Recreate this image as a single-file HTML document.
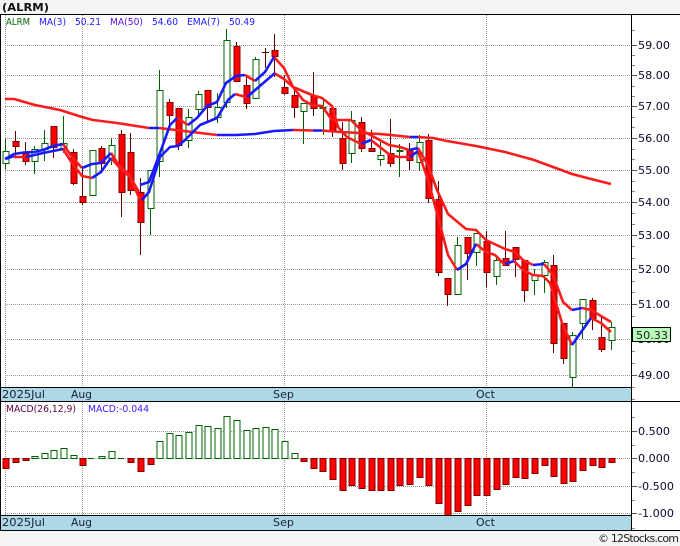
<!DOCTYPE html>
<html><head><meta charset="utf-8"><title>ALRM</title>
<style>html,body{margin:0;padding:0;background:#f4f4f4;width:680px;height:546px;overflow:hidden}svg{display:block}text{font-family:"DejaVu Sans","Liberation Sans",sans-serif;font-size:11px}.s text{font-size:10px}</style>
</head><body>
<svg width="680" height="546" viewBox="0 0 680 546" xmlns="http://www.w3.org/2000/svg">
<rect x="0" y="0" width="680" height="546" fill="#f4f4f4"/>
<rect x="0" y="14" width="680" height="516" fill="#fff"/>
<text x="2" y="11" font-weight="bold" fill="#111" textLength="47" lengthAdjust="spacingAndGlyphs">(ALRM)</text>

<g shape-rendering="crispEdges">
<path fill="none" stroke="#999" stroke-dasharray="1 1" d="M5 45.5H632M5 75.5H632M5 106.5H632M5 138.5H632M5 170.5H632M5 202.5H632M5 235.5H632M5 269.5H632M5 304.5H632M5 339.5H632M5 375.5H632M5 431.5H632M5 458.5H632M5 486.5H632M5 513.5H632M5.5 15V388M82.5 15V388M284.5 15V388M486.5 15V388M5.5 402V515M82.5 402V515M284.5 402V515M486.5 402V515"/>

<path fill="none" stroke="#006400" d="M5.5 139V169M34.5 146V174M44.5 130V161M63.5 116V153M92.5 150V195M111.5 138V165M150.5 170V235M159.5 70V177M188.5 109V148M198.5 91V115M217.5 93V123M226.5 29V108M255.5 57V98M303.5 103V144M323.5 100V135M351.5 111V163M380.5 142V166M399.5 144V177M419.5 135V171M457.5 237V294M476.5 233V266M496.5 257V285M534.5 269V295M544.5 260V293M572.5 332V387M582.5 299V339M611.5 322V350"/>
<path fill="none" stroke="#600000" d="M15.5 131V158M25.5 142V165M53.5 126V158M73.5 149V185M82.5 167V205M101.5 146V170M121.5 130V217M130.5 133V195M140.5 178V255M169.5 99V125M178.5 108V150M207.5 90V121M236.5 42V82M246.5 75V109M265.5 48V68M262 52.5H269M274.5 34V77M284.5 75V95M294.5 89V118M313.5 72V116M332.5 108V137M342.5 122V170M361.5 117V152M371.5 130V152M390.5 119V167M409.5 143V170M428.5 134V203M438.5 181V276M447.5 278V306M467.5 237V280M486.5 231V287M505.5 231V266M515.5 247V277M524.5 260V302M553.5 255V353M563.5 323V364M592.5 298V330M601.5 315V352"/>
<path fill="#fff" stroke="#006400" d="M3 151.5h6v12h-6zM32 149.5h6v12h-6zM42 143.5h6v6h-6zM61 143.5h6v5h-6zM90 150.5h6v45h-6zM109 145.5h6v13h-6zM148 170.5h6v38h-6zM157 90.5h6v71h-6zM186 117.5h6v23h-6zM196 94.5h6v15h-6zM215 107.5h6v10h-6zM224 40.5h6v62h-6zM253 59.5h6v39h-6zM301 103.5h6v8h-6zM320 107.5h6v1h-6zM349 120.5h6v33h-6zM378 155.5h6v4h-6zM397 150.5h6v1h-6zM417 142.5h6v20h-6zM455 245.5h6v49h-6zM474 233.5h6v19h-6zM494 260.5h6v16h-6zM532 275.5h6v5h-6zM542 262.5h6v13h-6zM570 335.5h6v42h-6zM580 299.5h6v24h-6zM609 327.5h6v13h-6z"/>
<path fill="#f00" stroke="#800000" d="M13 141.5h6v5h-6zM23 153.5h6v8h-6zM51 126.5h6v21h-6zM71 152.5h6v31h-6zM80 196.5h6v6h-6zM99 148.5h6v15h-6zM119 134.5h6v58h-6zM128 152.5h6v38h-6zM138 192.5h6v30h-6zM167 102.5h6v13h-6zM176 108.5h6v37h-6zM205 90.5h6v17h-6zM234 46.5h6v35h-6zM244 85.5h6v18h-6zM272 50.5h6v6h-6zM282 87.5h6v6h-6zM292 95.5h6v12h-6zM311 96.5h6v12h-6zM330 108.5h6v22h-6zM340 138.5h6v25h-6zM359 122.5h6v26h-6zM369 148.5h6v3h-6zM388 153.5h6v10h-6zM407 150.5h6v10h-6zM426 140.5h6v58h-6zM436 199.5h6v73h-6zM445 278.5h6v16h-6zM465 237.5h6v16h-6zM484 241.5h6v31h-6zM503 258.5h6v7h-6zM513 247.5h6v12h-6zM522 260.5h6v30h-6zM551 265.5h6v78h-6zM561 323.5h6v35h-6zM590 300.5h6v18h-6zM599 337.5h6v12h-6z"/>

<path fill="#fff" stroke="#006400" d="M32 456.5h6v2h-6zM42 453.5h6v5h-6zM51 450.5h6v8h-6zM61 448.5h6v10h-6zM71 455.5h6v3h-6zM99 456.5h6v2h-6zM109 451.5h6v7h-6zM157 441.5h6v17h-6zM167 433.5h6v25h-6zM176 435.5h6v23h-6zM186 432.5h6v26h-6zM196 425.5h6v33h-6zM205 426.5h6v32h-6zM215 428.5h6v30h-6zM224 416.5h6v42h-6zM234 420.5h6v38h-6zM244 430.5h6v28h-6zM253 428.5h6v30h-6zM263 427.5h6v31h-6zM272 429.5h6v29h-6zM282 441.5h6v17h-6zM292 453.5h6v5h-6z"/>
<path fill="none" stroke="#006400" d="M88 458.5h6M118 458.5h6"/>
<path fill="#f00" stroke="#800000" d="M3 458.5h6v10h-6zM13 458.5h6v4h-6zM23 458.5h6v2h-6zM80 458.5h6v7h-6zM128 458.5h6v4h-6zM138 458.5h6v13h-6zM148 458.5h6v6h-6zM301 458.5h6v3h-6zM311 458.5h6v10h-6zM320 458.5h6v13h-6zM330 458.5h6v21h-6zM340 458.5h6v32h-6zM349 458.5h6v27h-6zM359 458.5h6v30h-6zM369 458.5h6v32h-6zM378 458.5h6v32h-6zM388 458.5h6v32h-6zM397 458.5h6v27h-6zM407 458.5h6v26h-6zM417 458.5h6v19h-6zM426 458.5h6v27h-6zM436 458.5h6v45h-6zM445 458.5h6v57h-6zM455 458.5h6v53h-6zM465 458.5h6v47h-6zM474 458.5h6v37h-6zM484 458.5h6v37h-6zM494 458.5h6v31h-6zM503 458.5h6v26h-6zM513 458.5h6v19h-6zM522 458.5h6v20h-6zM532 458.5h6v15h-6zM542 458.5h6v7h-6zM551 458.5h6v18h-6zM561 458.5h6v25h-6zM570 458.5h6v23h-6zM580 458.5h6v12h-6zM590 458.5h6v7h-6zM599 458.5h6v9h-6zM609 458.5h6v4h-6z"/>
</g>

<g fill="none" stroke-width="2.6" stroke-linejoin="round">
<path stroke="#fa1c1c" d="M5 99L14 99L35 105L60 110L82 117L93 120L117 123L149 128M159 128L217 135M293 130L313 130.5M322 130.5L340 132L380 134L410 137M418 137L433 138L447 141L476 146L505 152L534 160L553 167L572 174L591 179L611 184"/>
<path stroke="#1a1aff" d="M149 128L159 128M217 135L236 135L255 134L274 131L293 130M313 130.5L322 130.5M410 137L418 137"/>
<path stroke="#fa1c1c" d="M63 144L72 157L82 168M111 153L120 167L128 173L139 192M177 118L188 125M245 75L255 81M274 57L284 68L293 87L303 100L312 105L322 106L332 120L351 120L361 130L389 145L400 147L409 150M418 148L428 165L437 190L448 214L466 229L476 230L486 240L505 249L515 252L523 260L533 265M544 264L553 275L563 302L572 310M582 308L591 310L611 322"/>
<path stroke="#fa1c1c" d="M14 157L26 157M63 149L72 163L82 176L92 178M111 158L120 168L130 177L140 200M235 94L246 97M274 73L284 79L293 87L312 95L322 98L332 106L338 127L347 137L361 144M371 140L390 155L399 157L410 157M418 151L428 180L438 217L448 255L457 270M476 244L486 252L495 255L505 265M514 261L523 270L533 275L543 276L550 283L562 323L572 345M591 318L601 323L611 332"/>
<path stroke="#1a1aff" d="M5 159L14 154L24 152.5L34 152L43 150L53 146L63 144M82 168L92 164L101 163L111 153M140 185L149 182L160 153L170 125L177 118M188 125L197 118L207 106L217 102L226 83L236 76L245 75M255 81L265 72L274 57M409 150L418 148M533 265L544 264M572 310L582 308"/>
<path stroke="#1a1aff" d="M5 159L14 156M26 157L43 153L63 149M92 178L101 172L111 158M142 200L149 192L160 157L170 147L178 146L185 140L200 125L217 118L228 100L235 94M247 97L275 73M361 144L371 140M410 157L418 151M457 270L466 264L476 244M505 264L514 261M572 345L591 318"/>
</g>

<g shape-rendering="crispEdges">
<rect x="0" y="388" width="632" height="13" fill="#add8e6"/>
<rect x="0" y="515" width="632" height="15" fill="#add8e6"/>
<path stroke="#000" fill="none" d="M0 14.5H680M0 387.5H632M0 401.5H680M0 515.5H632M0 530.5H680M631.5 14V530M0.5 14V530"/>
<path stroke="#888" fill="none" d="M632 30.5h3M632 55.5h3M632 65.5h3M632 86.5h3M632 96.5h3M632 117.5h3M632 127.5h3M632 149.5h3M632 159.5h3M632 181.5h3M632 191.5h3M632 213.5h3M632 224.5h3M632 246.5h3M632 258.5h3M632 281.5h3M632 292.5h3M632 316.5h3M632 351.5h3M632 363.5h3M632 387.5h3M632 399.5h3M632 417.5h3M632 445.5h3M632 472.5h3M632 500.5h3M632 528.5h3"/>
<path stroke="#555" fill="none" d="M632 45.5h5M632 75.5h5M632 106.5h5M632 138.5h5M632 170.5h5M632 202.5h5M632 235.5h5M632 269.5h5M632 304.5h5M632 375.5h5M632 431.5h5M632 458.5h5M632 486.5h5M632 513.5h5"/>
</g>

<g fill="#0a0a30">
<text x="638" y="49" textLength="32" lengthAdjust="spacingAndGlyphs">59.00</text>
<text x="638" y="79" textLength="32" lengthAdjust="spacingAndGlyphs">58.00</text>
<text x="638" y="110" textLength="32" lengthAdjust="spacingAndGlyphs">57.00</text>
<text x="638" y="142" textLength="32" lengthAdjust="spacingAndGlyphs">56.00</text>
<text x="638" y="174" textLength="32" lengthAdjust="spacingAndGlyphs">55.00</text>
<text x="638" y="206" textLength="32" lengthAdjust="spacingAndGlyphs">54.00</text>
<text x="638" y="239" textLength="32" lengthAdjust="spacingAndGlyphs">53.00</text>
<text x="638" y="273" textLength="32" lengthAdjust="spacingAndGlyphs">52.00</text>
<text x="638" y="308" textLength="32" lengthAdjust="spacingAndGlyphs">51.00</text>
<text x="638" y="343" textLength="32" lengthAdjust="spacingAndGlyphs">50.00</text>
<text x="638" y="379" textLength="32" lengthAdjust="spacingAndGlyphs">49.00</text>
<text x="638" y="435" textLength="32" lengthAdjust="spacingAndGlyphs">0.500</text>
<text x="638" y="462" textLength="32" lengthAdjust="spacingAndGlyphs">0.000</text>
<text x="638" y="490" textLength="36" lengthAdjust="spacingAndGlyphs">-0.500</text>
<text x="638" y="517" textLength="36" lengthAdjust="spacingAndGlyphs">-1.000</text>
</g>
<rect x="632.5" y="327.5" width="38" height="14" fill="#b9fbb9" stroke="#000" shape-rendering="crispEdges"/>
<text x="636" y="339" fill="#222" textLength="32" lengthAdjust="spacingAndGlyphs">50.33</text>

<g class="s">
<text x="6" y="25" fill="#006400" textLength="24" lengthAdjust="spacingAndGlyphs">ALRM</text>
<text x="39" y="25" fill="#1a1aff" textLength="27" lengthAdjust="spacingAndGlyphs">MA(3)</text>
<text x="75" y="25" fill="#1a1aff" textLength="26" lengthAdjust="spacingAndGlyphs">50.21</text>
<text x="110" y="25" fill="#5a14f0" textLength="33" lengthAdjust="spacingAndGlyphs">MA(50)</text>
<text x="152" y="25" fill="#1a1aff" textLength="26" lengthAdjust="spacingAndGlyphs">54.60</text>
<text x="187" y="25" fill="#1a1aff" textLength="33" lengthAdjust="spacingAndGlyphs">EMA(7)</text>
<text x="229" y="25" fill="#1a1aff" textLength="26" lengthAdjust="spacingAndGlyphs">50.49</text>
<text x="6" y="412" fill="#600040" textLength="70" lengthAdjust="spacingAndGlyphs">MACD(26,12,9)</text>
<text x="88" y="412" fill="#3a1aff" textLength="61" lengthAdjust="spacingAndGlyphs">MACD:-0.044</text>
</g>
<g fill="#1a2030">
<text x="2" y="398" textLength="43" lengthAdjust="spacingAndGlyphs">2025Jul</text>
<text x="71" y="398" textLength="21" lengthAdjust="spacingAndGlyphs">Aug</text>
<text x="273" y="398" textLength="21" lengthAdjust="spacingAndGlyphs">Sep</text>
<text x="476" y="398" textLength="19" lengthAdjust="spacingAndGlyphs">Oct</text>
<text x="2" y="526" textLength="43" lengthAdjust="spacingAndGlyphs">2025Jul</text>
<text x="71" y="526" textLength="21" lengthAdjust="spacingAndGlyphs">Aug</text>
<text x="273" y="526" textLength="21" lengthAdjust="spacingAndGlyphs">Sep</text>
<text x="476" y="526" textLength="19" lengthAdjust="spacingAndGlyphs">Oct</text>
<text x="598" y="542" fill="#222" textLength="81" lengthAdjust="spacing">© 12Stocks.com</text>
</g>
</svg>
</body></html>
